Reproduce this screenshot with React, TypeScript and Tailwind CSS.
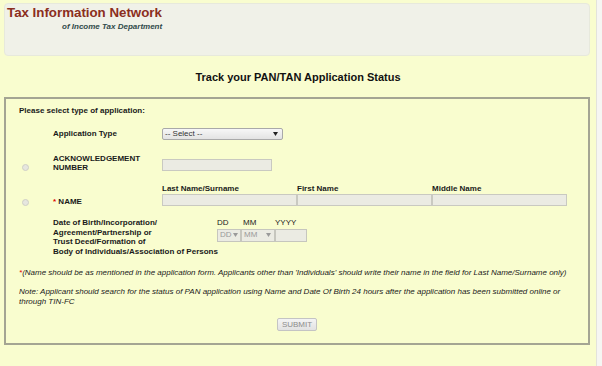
function Arrow({ color }: { color: string }) {
  return (
    <svg width="5" height="4" viewBox="0 0 5 4" className="shrink-0">
      <polygon points="0,0 5,0 2.5,4" fill={color} />
    </svg>
  );
}

function Radio() {
  return <div className="ml-[2.5px] h-[7px] w-[7px] rounded-full border border-[#cfcfc6] bg-[#e6e6df]" />;
}

function Field({ className }: { className: string }) {
  return <div className={`h-[12px] border border-[#c9c9c1] bg-[#ebebe3] ${className}`} />;
}

export default function App() {
  return (
    <div className="flex h-[366px] w-[602px] overflow-hidden bg-[#f9fdcf] font-['Liberation_Sans',Arial,sans-serif] text-[#1a1a1a]">
      <div className="w-[596px] shrink-0">
        <header className="ml-[4px] mt-[3px] h-[53px] w-[586px] rounded-[4px] border border-[#e7e9dc] bg-[#f0f1e8] pl-[2px] pt-[2.3px]">
          <h1 className="text-[13.3px] font-bold leading-none text-[#8b2e20]">Tax Information Network</h1>
          <p className="ml-[55px] mt-[3.6px] text-[8px] font-bold italic leading-none text-[#2f4a4a]">
            of Income Tax Department
          </p>
        </header>

        <h2 className="mt-[15.5px] text-center text-[11px] font-bold leading-none text-[#111]">
          Track your PAN/TAN Application Status
        </h2>

        <div className="ml-[4px] mt-[14.5px] h-[248px] w-[586px] border-2 border-[#a4a593] pl-[13px] pt-[8px] text-[8px]">
          <p className="font-bold leading-none">Please select type of application:</p>

          <div className="mt-[13px] flex h-[12px] items-center">
            <div className="w-[34px]" />
            <div className="w-[109px] font-bold">Application Type</div>
            <div className="flex h-[12px] w-[121px] items-center justify-between rounded-[2px] border border-[#a9a9a9] bg-gradient-to-b from-[#f7f7f7] to-[#e3e3e3] pl-[2px] pr-[4px] text-[#333]">
              <span className="leading-none">-- Select --</span>
              <Arrow color="#222" />
            </div>
          </div>

          <div className="mt-[13.5px] flex h-[18px] items-start">
            <div className="w-[34px] pt-[10px]">
              <Radio />
            </div>
            <div className="w-[109px] font-bold leading-[9px]">
              ACKNOWLEDGEMENT
              <br />
              NUMBER
            </div>
            <Field className="mt-[5.5px] w-[110px]" />
          </div>

          <div className="mt-[13.5px] flex items-end">
            <div className="w-[34px] pb-[0.5px]">
              <Radio />
            </div>
            <div className="w-[109px] font-bold leading-none">
              <span className="text-[#e00000]">*</span> NAME
            </div>
            <div>
              <div className="flex font-bold leading-none">
                <span className="w-[135px]">Last Name/Surname</span>
                <span className="w-[135px]">First Name</span>
                <span className="w-[135px]">Middle Name</span>
              </div>
              <div className="mt-[1px] flex">
                <Field className="w-[135px]" />
                <Field className="w-[135px]" />
                <Field className="w-[135px]" />
              </div>
            </div>
          </div>

          <div className="mt-[12.3px] flex items-start">
            <div className="w-[34px]" />
            <div className="w-[164px] shrink-0 whitespace-nowrap font-bold leading-[9.4px]">
              Date of Birth/Incorporation/
              <br />
              Agreement/Partnership or
              <br />
              Trust Deed/Formation of
              <br />
              Body of Individuals/Association of Persons
            </div>
            <div>
              <div className="flex leading-[9.4px]">
                <span className="w-[26px]">DD</span>
                <span className="w-[32px]">MM</span>
                <span>YYYY</span>
              </div>
              <div className="mt-[0.8px] flex h-[13px]">
                <div className="flex w-[24px] items-center justify-between border border-[#c6c6be] bg-[#ebebe3] pl-[2px] pr-[2px] text-[#9a9a9a]">
                  <span className="leading-none">DD</span>
                  <Arrow color="#9a9a9a" />
                </div>
                <div className="flex w-[34px] items-center justify-between border border-[#c6c6be] bg-[#ebebe3] pl-[2px] pr-[3px] text-[#9a9a9a]">
                  <span className="leading-none">MM</span>
                  <Arrow color="#9a9a9a" />
                </div>
                <div className="h-[13px] w-[32px] border border-[#c6c6be] bg-[#ebebe3]" />
              </div>
            </div>
          </div>

          <p className="mt-[12.6px] italic leading-none">
            <span className="text-[#e00000]">*</span>(Name should be as mentioned in the application form. Applicants other than 'Individuals' should write their name in the field for Last Name/Surname only)
          </p>

          <p className="mt-[10px] w-[548px] italic leading-[10px]">
            Note: Applicant should search for the status of PAN application using Name and Date Of Birth 24 hours after the application has been submitted online or through TIN-FC
          </p>

          <div className="mt-[11.5px] flex justify-center pr-[13px]">
            <button className="flex h-[13px] w-[40px] items-center justify-center rounded-[2px] border border-[#c4c4c4] bg-gradient-to-b from-[#f4f4f4] to-[#e2e2e2] text-[8px] leading-none text-[#8c8c8c]">
              SUBMIT
            </button>
          </div>
        </div>
      </div>
      <div className="w-[6px] border-l border-[#e3e3dc] bg-[#f6f6f3]" />
    </div>
  );
}
